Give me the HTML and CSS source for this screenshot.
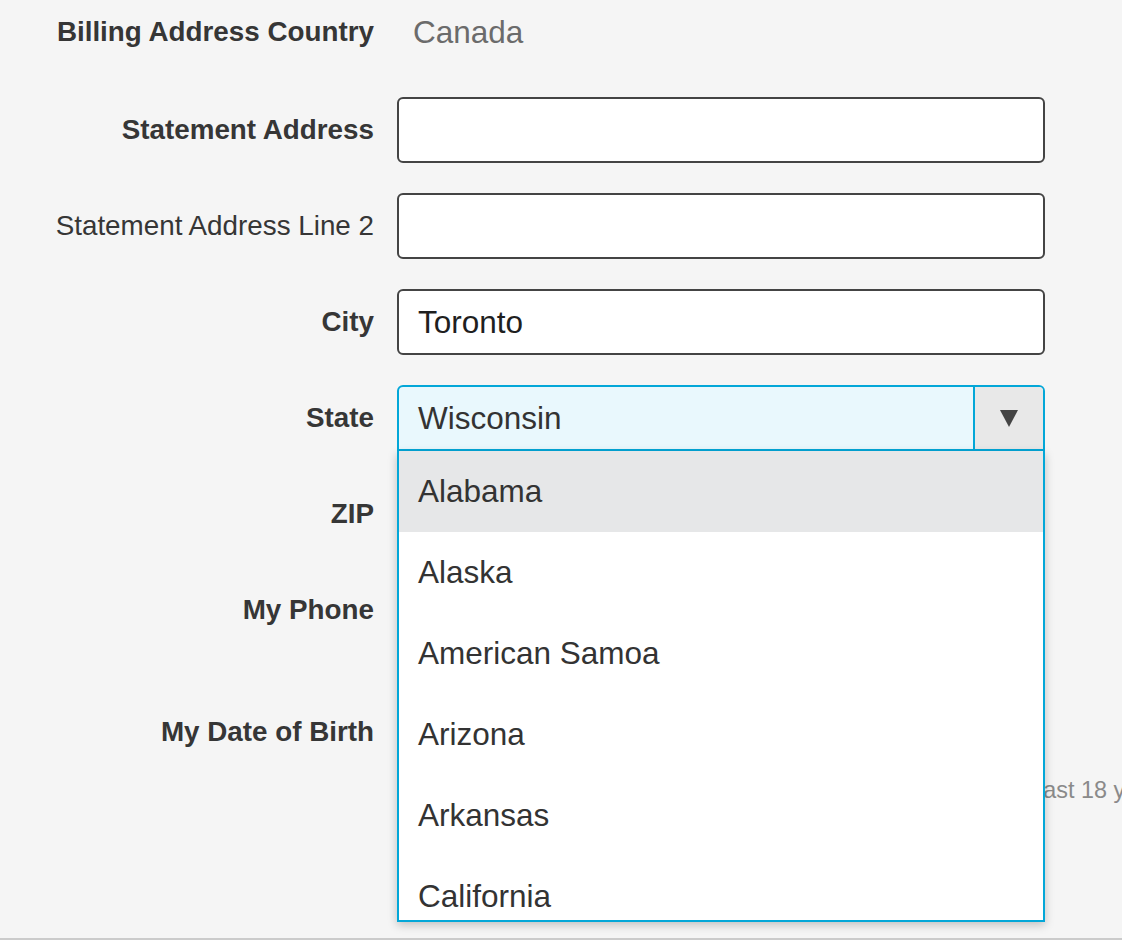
FILE: index.html
```html
<!DOCTYPE html>
<html lang="en">
<head>
<meta charset="utf-8">
<title>Statement Address</title>
<link rel="stylesheet" href="styles.css">
</head>
<body>
<div class="page">
  <form class="form">
    <div class="row row-static">
      <div class="label">Billing Address Country</div>
      <div class="static">Canada</div>
    </div>
    <div class="row">
      <label class="label">Statement Address</label>
      <input class="input" type="text">
    </div>
    <div class="row">
      <label class="label label-regular">Statement Address Line 2</label>
      <input class="input" type="text">
    </div>
    <div class="row">
      <label class="label">City</label>
      <input class="input" type="text" value="Toronto">
    </div>
    <div class="row">
      <label class="label">State</label>
      <div class="select-wrap">
        <div class="select">
          <span class="select-value">Wisconsin</span>
          <span class="select-arrow"><span class="triangle"></span></span>
        </div>
        <ul class="menu">
          <li class="option option-active">Alabama</li>
          <li class="option">Alaska</li>
          <li class="option">American Samoa</li>
          <li class="option">Arizona</li>
          <li class="option">Arkansas</li>
          <li class="option">California</li>
        </ul>
      </div>
    </div>
    <div class="row">
      <label class="label">ZIP</label>
      <input class="input" type="text">
    </div>
    <div class="row">
      <label class="label">My Phone</label>
      <input class="input" type="text">
    </div>
    <div class="row row-dob">
      <label class="label">My Date of Birth</label>
      <div class="dob">
        <div class="input dob-part"></div>
        <div class="input dob-part"></div>
        <div class="input dob-part"></div>
      </div>
    </div>
    <div class="row row-hint">
      <span></span>
      <p class="hint">Note that all applicants must be a resident of Canada and at least 18 years of age.</p>
    </div>
  </form>
</div>
</body>
</html>
```

FILE: styles.css
```css
html, body {
  margin: 0;
  padding: 0;
  background: #ffffff;
}

.page {
  height: 938px;
  background: #f5f5f5;
  border-bottom: 2px solid #cbcbcb;
  overflow: hidden;
  font-family: "Liberation Sans", Arial, Helvetica, sans-serif;
  color: #333333;
}

.form {
  display: flex;
  flex-direction: column;
  gap: 30px;
  margin: 0;
}

.row {
  display: grid;
  grid-template-columns: 374px 648px;
  column-gap: 23px;
  align-items: center;
  height: 66px;
}

.row-static {
  height: 64px;
  margin-bottom: 3px;
}

.row-dob {
  margin-top: 26px;
}

.row-hint {
  height: auto;
  margin-top: -18px;
}

.label {
  text-align: right;
  font-size: 27.8px;
  font-weight: bold;
  color: #363636;
  white-space: nowrap;
}

.label-regular {
  font-weight: normal;
}

.static {
  padding-left: 16px;
  font-size: 31.5px;
  color: #6b6b6b;
}

.input {
  box-sizing: border-box;
  width: 648px;
  height: 66px;
  margin: 0;
  padding: 0 19px;
  border: 2px solid #444444;
  border-radius: 6px;
  background: #ffffff;
  font-family: "Liberation Sans", Arial, Helvetica, sans-serif;
  font-size: 31.5px;
  color: #1f1f1f;
  outline: none;
}

.select-wrap {
  position: relative;
  width: 648px;
  height: 66px;
  z-index: 5;
}

.select {
  box-sizing: border-box;
  display: flex;
  align-items: stretch;
  height: 66px;
  border: 2px solid #03a7d8;
  border-radius: 6px 6px 0 0;
  background: #e9f8fd;
  overflow: hidden;
}

.select-value {
  flex: 1;
  display: flex;
  align-items: center;
  padding-left: 19px;
  font-size: 31.5px;
  color: #333333;
}

.select-arrow {
  width: 68px;
  display: flex;
  align-items: center;
  justify-content: center;
  background: #e8e8e8;
  border-left: 2px solid #03a7d8;
}

.triangle {
  width: 0;
  height: 0;
  border-left: 9.5px solid transparent;
  border-right: 9.5px solid transparent;
  border-top: 17px solid #444444;
  margin-top: 1px;
}

.menu {
  position: absolute;
  top: 100%;
  left: 0;
  box-sizing: border-box;
  width: 648px;
  height: 471px;
  margin: 0;
  padding: 0;
  list-style: none;
  background: #ffffff;
  border: 2px solid #03a7d8;
  border-top: none;
  box-shadow: 0 3px 9px rgba(0, 0, 0, 0.22);
  overflow: hidden;
}

.option {
  display: flex;
  align-items: center;
  height: 81px;
  padding-left: 19px;
  font-size: 31.5px;
  color: #333333;
}

.option-active {
  background: #e6e7e8;
}

.dob {
  display: flex;
  gap: 16px;
}

.dob-part {
  flex: 1;
  width: auto;
}

.hint {
  margin: 0;
  font-size: 23.4px;
  color: #8a8a8a;
  white-space: nowrap;
}
```
